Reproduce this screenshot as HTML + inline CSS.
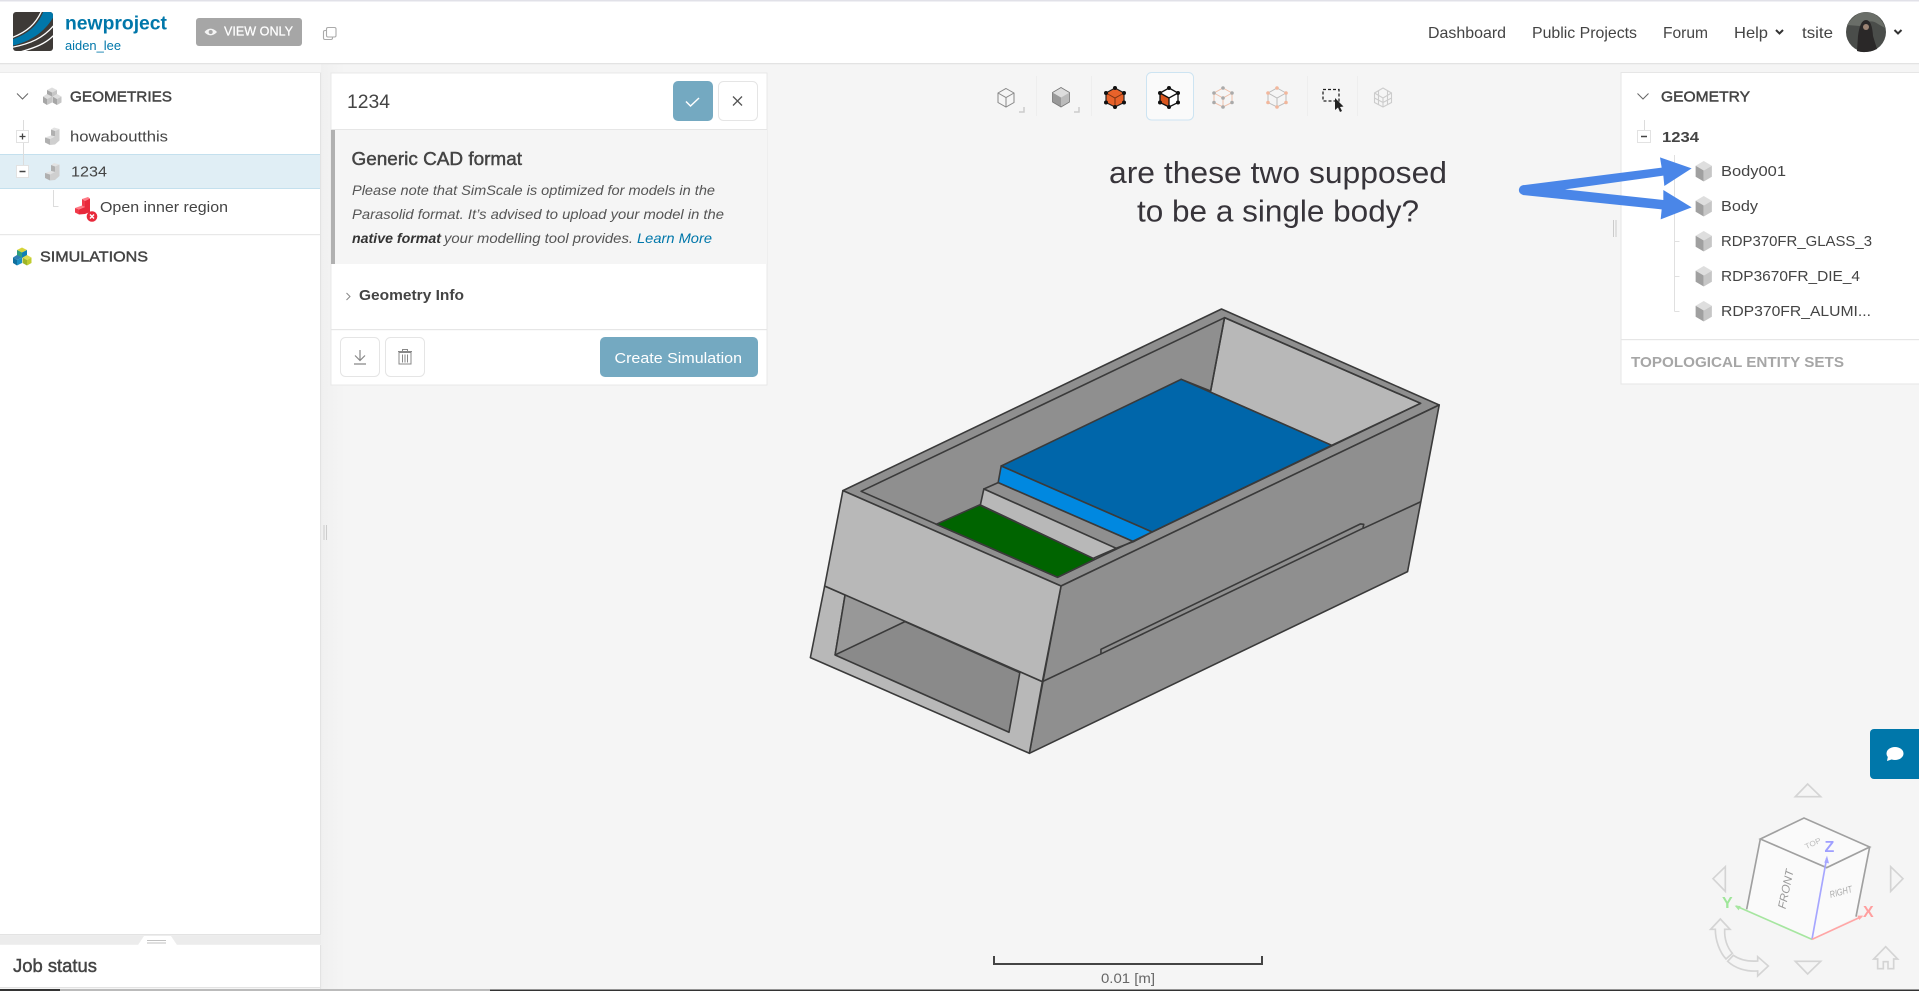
<!DOCTYPE html>
<html lang="en"><head><meta charset="utf-8"><title>newproject</title>
<style>
html,body{margin:0;padding:0;background:#f5f5f5;overflow:hidden}
svg{display:block;position:absolute;left:0;top:0}
text{font-family:"Liberation Sans",sans-serif;fill:#444;font-size:15px}
.semi{stroke:#444;stroke-width:.45px}
.m{vector-effect:non-scaling-stroke;stroke:#3a3a3a;stroke-width:1.6;stroke-linejoin:round}
</style></head><body>
<svg width="1919" height="991" viewBox="0 0 1919 991" xmlns="http://www.w3.org/2000/svg">
<defs>
<clipPath id="lg"><rect x="13" y="12" width="40" height="39" rx="3"/></clipPath>
<linearGradient id="gut" x1="0" x2="1" y1="0" y2="0"><stop offset="0" stop-color="#f0f0f0"/><stop offset="1" stop-color="#f5f5f5"/></linearGradient>
<symbol id="cube" viewBox="0 0 18 22" overflow="visible">
<polygon points="9,0 17.5,5 9,10 .5,5" fill="#dedede"/>
<polygon points=".5,5 9,10 9,21.5 .5,16.5" fill="#a0a0a0"/>
<polygon points="17.5,5 9,10 9,21.5 17.5,16.5" fill="#c6c6c6"/>
</symbol>
<symbol id="step" viewBox="0 0 15 18" overflow="visible">
<polygon points="9,0 14.5,1.5 10,3.5 6,2" fill="#e2e2e2"/>
<polygon points="6,2 10,3.5 10,9 6,8" fill="#b0b0b0"/>
<polygon points="10,3.5 14.5,1.5 14.5,13 10,17" fill="#cfcfcf"/>
<polygon points="0,10 6,8 10,9 5,11.5" fill="#e2e2e2"/>
<polygon points="0,10 5,11.5 5,17.5 0,15" fill="#b0b0b0"/>
<polygon points="5,11.5 10,9 10,17 5,17.500" fill="#cfcfcf"/>
</symbol>
</defs>

<!-- background -->
<rect width="1919" height="991" fill="#f5f5f5"/>
<rect x="321" y="64" width="24" height="925" fill="url(#gut)"/>

<!-- header -->
<rect y="0" width="1919" height="63" fill="#fff"/>
<rect y="0" width="1919" height="1.5" fill="#e1e1e8"/>
<rect y="63" width="1919" height="1.3" fill="#e3e3e3"/>
<g clip-path="url(#lg)">
<rect x="13" y="12" width="40" height="39" fill="#3e3a37"/>
<path d="M44,10 C38,26 28,34 11,40 L11,46 C30,42 46,32 55,14 L55,10Z" fill="#0077aa"/>
<path d="M42,10 C36,24 27,32 11,38" fill="none" stroke="#fff" stroke-width="1.3"/>
<path d="M55,24 C44,38 30,44 11,47.5" fill="none" stroke="#fff" stroke-width="1.3"/>
<path d="M55,34 C46,44 34,48 20,52" fill="none" stroke="#fff" stroke-width="1.3"/>
</g>
<text x="65" y="29.5" font-weight="bold" style="font-size:19px;fill:#0077aa" textLength="102" lengthAdjust="spacingAndGlyphs">newproject</text>
<text x="65" y="50" style="font-size:13px;fill:#0077aa" textLength="56" lengthAdjust="spacingAndGlyphs">aiden_lee</text>
<rect x="196" y="18" width="106" height="28" rx="3" fill="#a6a6a6"/>
<path d="M204.500,32 C208,27.500 213,27.500 217,32 C213,36.500 208,36.500 204.500,32Z" fill="#f4f4f4"/><circle cx="210.700" cy="32" r="2" fill="#a6a6a6"/>
<text x="224" y="35.500" style="font-size:13px;fill:#fff;stroke:#fff;stroke-width:.25px" textLength="69" lengthAdjust="spacingAndGlyphs">VIEW ONLY</text>
<g fill="#fff" stroke="#aaa" stroke-width="1.100"><rect x="323.500" y="30.500" width="9" height="9" rx="1.500"/><rect x="326.500" y="27.500" width="9.500" height="9.500" rx="1.500"/></g>

<text x="1428" y="38" style="font-size:16px" textLength="78" lengthAdjust="spacingAndGlyphs">Dashboard</text>
<text x="1532" y="38" style="font-size:16px" textLength="105" lengthAdjust="spacingAndGlyphs">Public Projects</text>
<text x="1663" y="38" style="font-size:16px" textLength="45" lengthAdjust="spacingAndGlyphs">Forum</text>
<text x="1734" y="38" style="font-size:16px" textLength="34" lengthAdjust="spacingAndGlyphs">Help</text>
<text x="1802" y="38" style="font-size:16px" textLength="31" lengthAdjust="spacingAndGlyphs">tsite</text>
<path d="M1776,30 l3.500,3.500 l3.500,-3.500" fill="none" stroke="#333" stroke-width="2"/>
<path d="M1894.500,30 l3.500,3.500 l3.500,-3.500" fill="none" stroke="#333" stroke-width="2"/>
<circle cx="1866" cy="32" r="20" fill="#4a4d4a"/>
<path d="M1847,25 Q1856,12 1866,12 Q1880,13 1885,28 L1878,24 Q1870,18 1860,26Z" fill="#6a6e68"/>
<path d="M1857,51 L1858,36 Q1860,20 1866,20 Q1872,20 1873,36 L1877,49 Q1866,54 1857,51Z" fill="#2a2828"/>
<circle cx="1866" cy="27" r="3" fill="#9c8474"/>

<!-- left panel -->
<rect x="0" y="72" width="320.500" height="862" fill="#fff"/>
<rect x="320" y="72" width="1.200" height="862" fill="#e3e3e3"/>
<rect x="0" y="72" width="321" height="1" fill="#ececec"/>
<path d="M17,93.500 l5.500,5.500 l5.500,-5.500" fill="none" stroke="#666" stroke-width="1"/>
<g>
<polygon points="52,87.500 57,90 52,92.500 47,90" fill="#dedede"/><polygon points="47,90 52,92.500 52,97 47,94.500" fill="#a6a6a6"/><polygon points="57,90 52,92.500 52,97 57,94.500" fill="#c6c6c6"/>
<polygon points="47,94 52,96.500 47,99 43,96.500" fill="#dedede"/><polygon points="43,96.500 47,99 47,105 43,102.500" fill="#a6a6a6"/><polygon points="52,96.500 47,99 47,105 52,102.500" fill="#c6c6c6"/>
<polygon points="57,94 61.500,96.500 57,99 52.500,96.500" fill="#dedede"/><polygon points="52.500,96.500 57,99 57,105 52.500,102.500" fill="#a6a6a6"/><polygon points="61.500,96.500 57,99 57,105 61.500,102.500" fill="#c6c6c6"/>
</g>
<text class="semi" x="70" y="101.500" textLength="102" lengthAdjust="spacingAndGlyphs">GEOMETRIES</text>

<rect x="0" y="154" width="320" height="35" fill="#e0eef5"/>
<rect x="0" y="154" width="320" height="1" fill="#c4e0ee"/><rect x="0" y="188" width="320" height="1" fill="#c4e0ee"/>
<rect x="23" y="120" width="1" height="45" fill="#dcdcdc"/>
<rect x="16.500" y="130.500" width="12" height="12" fill="#fff" stroke="#e2e2e2"/>
<path d="M19.500,136.500h6M22.500,133.500v6" stroke="#444" stroke-width="1.300"/>
<rect x="16.500" y="165.500" width="12" height="12" fill="#fff" stroke="#e2e2e2"/>
<path d="M19.500,171.500h6" stroke="#444" stroke-width="1.500"/>
<use href="#step" x="45" y="127.500" width="15" height="18"/>
<use href="#step" x="45" y="163" width="15" height="18"/>
<text x="70" y="141.500" textLength="98" lengthAdjust="spacingAndGlyphs">howaboutthis</text>
<text x="71" y="176.500" textLength="36" lengthAdjust="spacingAndGlyphs">1234</text>
<path d="M53.500,190v16.500h5" fill="none" stroke="#dcdcdc"/>
<g>
<polygon points="82,199 88,197 90,198.500 85,201" fill="#ff7b86"/><polygon points="85,201 90,198.500 90,212 85,214" fill="#e8293b"/><polygon points="82,199 85,201 85,207 82,206" fill="#f03a4a"/>
<polygon points="75,208 82,205.500 85,207 79,209.500" fill="#ff7b86"/><polygon points="75,208 79,209.500 79,214.500 75,212.500" fill="#f03a4a"/><polygon points="79,209.500 85,207 85,214 79,214.500" fill="#e8293b"/>
<circle cx="92" cy="216.500" r="5.300" fill="#e8293b"/>
<path d="M90,214.500l4,4M94,214.500l-4,4" stroke="#fff" stroke-width="1.400"/>
</g>
<text x="100" y="212" textLength="128" lengthAdjust="spacingAndGlyphs">Open inner region</text>
<rect x="0" y="234" width="320" height="1.200" fill="#e8e8e8"/>
<g>
<polygon points="22,247.500 27,250 22,252.500 17,250" fill="#d6d43a"/><polygon points="17,250 22,252.500 22,258 17,255.500" fill="#2f9e7e"/><polygon points="27,250 22,252.500 22,258 27,255.500" fill="#0f7fb5"/>
<polygon points="17,255 22,257.500 17,260 13,257.500" fill="#2f7fb5"/><polygon points="13,257.500 17,260 17,265.500 13,263" fill="#0f6f9e"/><polygon points="22,257.500 17,260 17,265.500 22,263" fill="#1b8fc4"/>
<polygon points="27,255 31.500,257.500 27,260 22.500,257.500" fill="#dcdc50"/><polygon points="22.500,257.500 27,260 27,265.500 22.500,263" fill="#9db52a"/><polygon points="31.500,257.500 27,260 27,265.500 31.500,263" fill="#c0cc30"/>
</g>
<text class="semi" x="40" y="261.500" textLength="108" lengthAdjust="spacingAndGlyphs">SIMULATIONS</text>

<!-- lower left -->
<rect x="0" y="934" width="321" height="1.200" fill="#e3e3e3"/>
<rect x="0" y="935.500" width="321" height="9" fill="#ececec"/>
<polygon points="138,945 144,936 171,936 177,945" fill="#fff"/>
<rect x="147" y="940" width="19" height="1" fill="#c2c2c2"/><rect x="147" y="942.500" width="19" height="1" fill="#c2c2c2"/>
<rect x="0" y="945" width="320" height="43" fill="#fff"/>
<rect x="320" y="945" width="1.200" height="46" fill="#e3e3e3"/>
<rect x="0" y="987" width="320" height="1" fill="#e3e3e3"/>
<text class="semi" x="13" y="972" style="font-size:18px" textLength="84" lengthAdjust="spacingAndGlyphs">Job status</text>

<!-- info panel -->
<rect x="331" y="73" width="436" height="312" fill="#fff" stroke="#e8e8e8"/>
<text x="347" y="108" style="font-size:19px" textLength="43" lengthAdjust="spacingAndGlyphs">1234</text>
<rect x="673" y="81" width="40" height="40" rx="5" fill="#74a9c1"/>
<path d="M686,101.500l4.500,4.500l8.500,-8" fill="none" stroke="#fff" stroke-width="1.500"/>
<rect x="718.500" y="81.500" width="39" height="39" rx="5" fill="#fff" stroke="#e5e5e5"/>
<path d="M733,96.500l9,9M742,96.500l-9,9" stroke="#555" stroke-width="1.300"/>
<rect x="331" y="129" width="436" height="1.200" fill="#e6e6e6"/>
<rect x="331" y="130" width="436" height="134" fill="#f5f5f5"/>
<rect x="331" y="130" width="4" height="134" fill="#b0b0b0"/>
<text class="semi" x="351.500" y="165" style="font-size:18px" textLength="170.500" lengthAdjust="spacingAndGlyphs">Generic CAD format</text>
<g font-style="italic">
<text x="352" y="195" style="font-size:14px;fill:#555" textLength="363" lengthAdjust="spacingAndGlyphs">Please note that SimScale is optimized for models in the</text>
<text x="352" y="219" style="font-size:14px;fill:#555" textLength="372" lengthAdjust="spacingAndGlyphs">Parasolid format. It’s advised to upload your model in the</text>
<text x="352" y="243" font-weight="bold" style="font-size:14px;fill:#333" textLength="89" lengthAdjust="spacingAndGlyphs">native format</text>
<text x="444" y="243" style="font-size:14px;fill:#555" textLength="189" lengthAdjust="spacingAndGlyphs">your modelling tool provides.</text>
<text x="637" y="243" style="font-size:14px;fill:#0077aa" textLength="75" lengthAdjust="spacingAndGlyphs">Learn More</text>
</g>
<path d="M346.500,293l3.500,3.500l-3.500,3.500" fill="none" stroke="#888" stroke-width="1"/>
<text x="359" y="300" font-weight="bold" textLength="105" lengthAdjust="spacingAndGlyphs">Geometry Info</text>
<rect x="331" y="329" width="436" height="1.200" fill="#e6e6e6"/>
<rect x="340.500" y="337.500" width="39" height="39" rx="5" fill="#fff" stroke="#e5e5e5"/>
<path d="M360,350v10.500M355,355.500l5,5l5,-5M354,364h12" fill="none" stroke="#888" stroke-width="1.200"/>
<rect x="385.500" y="337.500" width="39" height="39" rx="5" fill="#fff" stroke="#e5e5e5"/>
<path d="M399,352.500v11.500h12V352.500ZM398,351.500h14M402.500,351.500v-2h5v2M402.500,354.500v8M405,354.500v8M407.500,354.500v8" fill="none" stroke="#888" stroke-width="1"/>
<rect x="600" y="337" width="158" height="40" rx="5" fill="#74a9c1"/>
<text x="614.500" y="363" style="fill:#fff;font-size:15px" textLength="127.500" lengthAdjust="spacingAndGlyphs">Create Simulation</text>

<!-- toolbar -->
<g stroke="#eeeeee"><path d="M1036.500,76v40M1091.500,76v40M1307.500,76v40M1357.500,76v40"/></g>
<rect x="1146.500" y="72.500" width="47" height="47.500" rx="5" fill="#fafafa" stroke="#cde4f2"/>
<!-- icon 1 -->
<g fill="none" stroke="#888" stroke-width="1"><path d="M1006,88.500l8,4.500v9.500l-8,4.500l-8,-4.500v-9.500ZM998,93l8,4.500l8,-4.500M1006,97.500v9.500"/></g>
<path d="M1019,112h5v-5" fill="none" stroke="#ccc" stroke-width="1.500"/>
<!-- icon 2 -->
<polygon points="1061,87.500 1069.500,92.500 1061,97.500 1052.500,92.500" fill="#ddd"/><polygon points="1052.500,92.500 1061,97.500 1061,107 1052.500,102" fill="#999"/><polygon points="1069.500,92.500 1061,97.500 1061,107 1069.500,102" fill="#bbb"/>
<path d="M1061,87.500l8.500,5v9.500l-8.500,5l-8.500,-5v-9.500Z" fill="none" stroke="#777" stroke-width=".8"/>
<path d="M1074,112h5v-5" fill="none" stroke="#ccc" stroke-width="1.500"/>
<!-- icon 3 -->
<polygon points="1115,88 1124,93 1124,102.500 1115,107 1106,102.500 1106,93" fill="#e8622a" stroke="#222" stroke-width="1.200"/>
<path d="M1106,93l9,5l9,-5M1115,98v9" fill="none" stroke="#7a3413" stroke-width="1"/>
<g fill="#111"><circle cx="1115" cy="88" r="2"/><circle cx="1124" cy="93" r="2"/><circle cx="1124" cy="102.500" r="2"/><circle cx="1115" cy="107" r="2"/><circle cx="1106" cy="102.500" r="2"/><circle cx="1106" cy="93" r="2"/></g>
<!-- icon 4 -->
<polygon points="1169,88 1178,93 1169,98 1160,93" fill="#fff"/><polygon points="1160,93 1169,98 1169,107 1160,102.500" fill="#d9561e"/><polygon points="1178,93 1169,98 1169,107 1178,102.500" fill="#fff"/>
<path d="M1169,88l9,5v9.500l-9,4.500l-9,-4.500v-9.500ZM1160,93l9,5l9,-5M1169,98v9" fill="none" stroke="#111" stroke-width="1.300"/>
<g fill="#111"><circle cx="1169" cy="88" r="2"/><circle cx="1178" cy="93" r="2"/><circle cx="1178" cy="102.500" r="2"/><circle cx="1169" cy="107" r="2"/><circle cx="1160" cy="102.500" r="2"/><circle cx="1160" cy="93" r="2"/></g>
<!-- icon 5 -->
<path d="M1223,88l9,5v9.500l-9,4.500l-9,-4.500v-9.500ZM1214,93l9,5l9,-5M1223,98v9" fill="none" stroke="#f0bfa8" stroke-width="1"/>
<g fill="#aaa"><circle cx="1223" cy="88" r="1.800"/><circle cx="1232" cy="93" r="1.800"/><circle cx="1232" cy="102.500" r="1.800"/><circle cx="1223" cy="107" r="1.800"/><circle cx="1214" cy="102.500" r="1.800"/><circle cx="1214" cy="93" r="1.800"/><circle cx="1223" cy="98" r="1.800"/></g>
<!-- icon 6 -->
<path d="M1277,88l9,5v9.500l-9,4.500l-9,-4.500v-9.500ZM1268,93l9,5l9,-5M1277,98v9" fill="none" stroke="#bcbcbc" stroke-width="1"/>
<g fill="#f2b79c"><circle cx="1277" cy="88" r="1.800"/><circle cx="1286" cy="93" r="1.800"/><circle cx="1286" cy="102.500" r="1.800"/><circle cx="1277" cy="107" r="1.800"/><circle cx="1268" cy="102.500" r="1.800"/><circle cx="1268" cy="93" r="1.800"/></g>
<!-- select -->
<rect x="1323" y="89.500" width="16" height="11.500" fill="none" stroke="#222" stroke-width="1.300" stroke-dasharray="3 2"/>
<polygon points="1335,98 1335,110 1338,107.500 1340,112 1342,111 1340,107 1343.500,106.500" fill="#222"/>
<!-- icon 8 -->
<g fill="none" stroke="#ccc" stroke-width="1.100"><path d="M1383,88l8.500,5v9.500l-8.500,4.500l-8.500,-4.500v-9.500ZM1374.500,93l8.500,5l8.500,-5M1383,98v9M1378.500,90.500v14M1387.500,90.500v14M1374.500,98l8.500,4.500l8.500,-4.500"/></g>

<!-- annotation -->
<text x="1109" y="183" style="font-size:31px;fill:#37343a" textLength="338" lengthAdjust="spacingAndGlyphs">are these two supposed</text>
<text x="1137" y="221.500" style="font-size:31px;fill:#37343a" textLength="282" lengthAdjust="spacingAndGlyphs">to be a single body?</text>

<!-- 3D model -->
<g transform="translate(780 290) scale(.4337 .3333)">
<polygon class="m" points="145,602 1018,57 1520,345 648,888" fill="#8f8f8f"/>
<polygon class="m" points="1025,83 1477,340 1272,466 925,268 993,303" fill="#b8b8b8"/>
<path class="m" d="M1025,83L993,303" fill="none"/>
<polygon class="m" points="925,268 1272,466 858,726 510,528" fill="#0066aa"/>
<polygon class="m" points="510,528 858,726 815,755 503,578" fill="#0088e0"/>
<polygon class="m" points="503,578 815,755 775,775 470,597" fill="#8f8f8f"/>
<polygon class="m" points="470,597 775,775 722,805 462,645" fill="#b8b8b8"/>
<polygon class="m" points="460,645 726,808 640,862 360,703" fill="#006400"/>
<polygon class="m" points="187,604 1025,83 1477,340 640,862" fill="none"/>
<polygon class="m" points="648,888 1520,345 1447,845 575,1390" fill="#8f8f8f"/>
<path class="m" d="M605,1175L740,1092M740,1078L1338,702L1346,703L1344,715L740,1092ZM1345,715L1478,635" fill="none"/>
<polygon class="m" points="103,888 605,1175 575,1390 70,1103" fill="#b8b8b8"/>
<polygon class="m" points="150,915 553,1148 528,1327 127,1095" fill="#8a8a8a"/>
<polygon points="150,915 288,995 127,1095" fill="#989898"/>
<path class="m" d="M127,1095L288,995M150,915L127,1095" fill="none"/>
<polygon class="m" points="145,602 648,888 605,1175 103,888" fill="#b8b8b8"/>
</g>

<!-- right panel -->
<rect x="1621" y="72.500" width="300" height="311.500" fill="#fff" stroke="#e6e6e6"/>
<path d="M1637.500,93.500l5.500,5.500l5.500,-5.500" fill="none" stroke="#666" stroke-width="1"/>
<text class="semi" x="1661" y="101.500" textLength="89" lengthAdjust="spacingAndGlyphs">GEOMETRY</text>
<rect x="1644" y="120" width="1" height="10" fill="#dcdcdc"/>
<rect x="1637.500" y="130.500" width="13" height="12" fill="#fff" stroke="#e2e2e2"/>
<path d="M1641,136.500h6" stroke="#444" stroke-width="1.500"/>
<text x="1662" y="142" font-weight="bold" textLength="37" lengthAdjust="spacingAndGlyphs">1234</text>
<path d="M1674.500,155V311.500M1674.500,241.500h5M1674.500,276.500h5M1674.500,311.500h5" fill="none" stroke="#e0e0e0"/>
<use href="#cube" x="1695" y="161" width="17.500" height="21"/>
<use href="#cube" x="1695" y="196" width="17.500" height="21"/>
<use href="#cube" x="1695" y="231" width="17.500" height="21"/>
<use href="#cube" x="1695" y="266" width="17.500" height="21"/>
<use href="#cube" x="1695" y="301" width="17.500" height="21"/>
<text x="1721" y="176" textLength="65" lengthAdjust="spacingAndGlyphs">Body001</text>
<text x="1721" y="211" textLength="37" lengthAdjust="spacingAndGlyphs">Body</text>
<text x="1721" y="246" textLength="151" lengthAdjust="spacingAndGlyphs">RDP370FR_GLASS_3</text>
<text x="1721" y="281" textLength="139" lengthAdjust="spacingAndGlyphs">RDP3670FR_DIE_4</text>
<text x="1721" y="316" textLength="150" lengthAdjust="spacingAndGlyphs">RDP370FR_ALUMI...</text>
<rect x="1621" y="339" width="298" height="1.200" fill="#e6e6e6"/>
<text x="1631" y="367" font-weight="bold" style="fill:#a6a6a6" textLength="213" lengthAdjust="spacingAndGlyphs">TOPOLOGICAL ENTITY SETS</text>
<path d="M1613.500,220v17M1616,220v17" stroke="#ccc"/>
<path d="M324,525v15M326.500,525v15" stroke="#ccc"/>

<!-- arrows -->
<g transform="translate(1400 0) scale(.33333)">
<polygon points="368,556 785,503 780,472 875,505 793,558 790,527 495,568 790,600 790,570 875,622 782,658 785,628 368,585" fill="#4a86e8"/>
<circle cx="371" cy="570" r="14.500" fill="#4a86e8"/>
</g>

<!-- chat -->
<path d="M1919,729H1874a4,4 0 0 0 -4,4V775a4,4 0 0 0 4,4H1919Z" fill="#0077aa"/>
<ellipse cx="1895" cy="753.500" rx="8.500" ry="6.500" fill="#fff"/><polygon points="1888,756 1887,761 1893,759" fill="#fff"/>

<!-- nav cube -->
<g transform="translate(1680 700) scale(.33333)">
<polygon points="241,417 372,354 569,441 528,650 396,718 200,628" fill="#fafafa"/>
<path d="M241,417L372,354L569,441L440,503ZM241,417L200,628M569,441L528,650" fill="none" stroke="#a0a0a0" stroke-width="5"/>
<g fill="none" stroke="#d4d4d4" stroke-width="5">
<polygon points="383,252 346,290 422,290"/>
<polygon points="383,822 346,784 422,784"/>
<polygon points="99,536 136,500 136,574"/>
<polygon points="669,536 632,500 632,574"/>
<path d="M617,740L581,777L593,777V806H610V785H624V806H641V777L653,777Z"/>
<path d="M121,657L92,688H106C106,720 118,755 138,777L157,760C140,740 133,715 134,688H150Z"/>
<path d="M143,784L160,766C180,780 205,785 233,783V770L265,798L233,828V813C198,815 165,805 143,784Z"/>
</g>
<line x1="396" y1="718" x2="168" y2="618" stroke="#a6e6a0" stroke-width="5"/>
<polygon points="164,617 182,618 176,631" fill="#a6e6a0"/>
<line x1="396" y1="718" x2="440" y2="475" stroke="#a6a6ff" stroke-width="5"/>
<polygon points="441,467 433,488 447,490" fill="#a6a6ff"/>
<line x1="396" y1="718" x2="546" y2="649" stroke="#ffa6a6" stroke-width="5"/>
<polygon points="550,647 532,647 538,660" fill="#ffa6a6"/>
</g>
<text transform="translate(1785.700 889) rotate(-78)" text-anchor="middle" font-style="italic" style="font-size:11.500px;fill:#999" y="4" textLength="40" lengthAdjust="spacingAndGlyphs">FRONT</text>
<text transform="translate(1841 892) rotate(-15)" text-anchor="middle" font-style="italic" style="font-size:9.500px;fill:#aaa" y="3" textLength="23" lengthAdjust="spacingAndGlyphs">RIGHT</text>
<text transform="translate(1812.700 843) rotate(-25)" text-anchor="middle" style="font-size:7.500px;fill:#bbb" y="3" textLength="17" lengthAdjust="spacingAndGlyphs">TOP</text>
<text x="1722" y="908" font-weight="bold" style="font-size:16px;fill:#9fe69a">Y</text>
<text x="1824.500" y="852" font-weight="bold" style="font-size:16px;fill:#9f9fff">Z</text>
<text x="1863" y="917" font-weight="bold" style="font-size:16px;fill:#ff9f9f">X</text>

<!-- scale -->
<path d="M994,956v8H1262V956" fill="none" stroke="#444" stroke-width="2"/>
<text x="1101" y="983" style="font-size:14px;fill:#666" textLength="54" lengthAdjust="spacingAndGlyphs">0.01 [m]</text>

<!-- bottom line -->
<rect x="0" y="989" width="60" height="2" fill="#333"/>
<rect x="60" y="989" width="430" height="2" fill="#bbb"/>
<rect x="490" y="989.500" width="1429" height="1.500" fill="#333"/>
</svg>
</body></html>
